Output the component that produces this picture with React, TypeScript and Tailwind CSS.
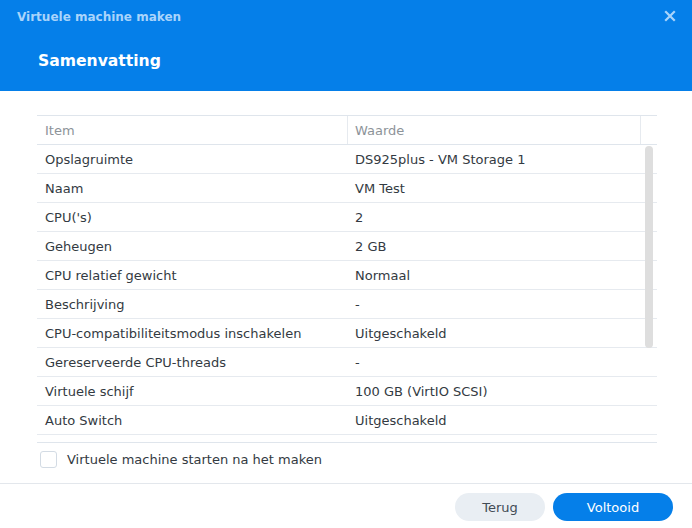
import React from "react";

const rows: [string, string][] = [
  ["Opslagruimte", "DS925plus - VM Storage 1"],
  ["Naam", "VM Test"],
  ["CPU('s)", "2"],
  ["Geheugen", "2 GB"],
  ["CPU relatief gewicht", "Normaal"],
  ["Beschrijving", "-"],
  ["CPU-compatibiliteitsmodus inschakelen", "Uitgeschakeld"],
  ["Gereserveerde CPU-threads", "-"],
  ["Virtuele schijf", "100 GB (VirtIO SCSI)"],
  ["Auto Switch", "Uitgeschakeld"],
];

export default function App() {
  return (
    <div
      className="w-[692px] h-[528px] bg-white flex flex-col text-[13px] text-[#333a42]"
      style={{ fontFamily: '"DejaVu Sans", Verdana, sans-serif' }}
    >
      <div className="h-[91px] bg-[#057fe9] flex flex-col shrink-0">
        <div className="h-[33px] flex items-center justify-between pl-[17px] pr-[16px]">
          <span className="font-bold text-[12px] text-[#a9d4fb]">Virtuele machine maken</span>
          <svg width="12" height="12" viewBox="0 0 12 12" className="mt-[-1px]">
            <path d="M2 2 L10 10 M10 2 L2 10" stroke="#a9d4fb" strokeWidth="2.2" strokeLinecap="square" />
          </svg>
        </div>
        <div className="pl-[38px] pt-[17px] text-white font-bold text-[15.6px]">Samenvatting</div>
      </div>

      <div className="px-[37px] pt-[24px] flex-1 flex flex-col">
        <div className="w-[620px] border-t border-[#dfe5ec]">
          <div className="flex h-[29px] border-b border-[#dfe5ec] text-[#8d9399]">
            <div className="w-[311px] border-r border-[#e6eaef] pl-[8px] flex items-center pt-[1px]">Item</div>
            <div className="w-[293px] border-r border-[#e6eaef] pl-[7px] flex items-center pt-[1px]">Waarde</div>
            <div className="flex-1" />
          </div>
          <div className="relative h-[298px] border-b border-[#dfe5ec]">
            {rows.map(([k, v]) => (
              <div key={k} className="flex h-[29px] border-b border-[#e6eaef]">
                <div className="w-[311px] pl-[8px] flex items-center pt-[1px]">{k}</div>
                <div className="flex-1 pl-[7px] flex items-center pt-[1px]">{v}</div>
              </div>
            ))}
            <div className="absolute left-[608px] top-[1px] w-[8px] h-[202px] rounded-full bg-[#dedede]" />
          </div>
        </div>
        <div className="flex items-center mt-[8px] pl-[3px] h-[17px]">
          <div className="w-[17px] h-[17px] rounded-[3px] border border-[#d3dbe4] bg-white" />
          <span className="ml-[10px] pt-[1px]">Virtuele machine starten na het maken</span>
        </div>
      </div>

      <div className="h-[45px] border-t border-[#e3e7ec] flex items-start justify-end pt-[9px] pr-[19px] gap-[8px] shrink-0">
        <button className="w-[90px] h-[28px] rounded-full bg-[#e9eef3] text-[#414b55] text-[13px] pt-[1px]">Terug</button>
        <button className="w-[120px] h-[28px] rounded-full bg-[#057fe9] text-white text-[13px] pt-[1px]">Voltooid</button>
      </div>
    </div>
  );
}
